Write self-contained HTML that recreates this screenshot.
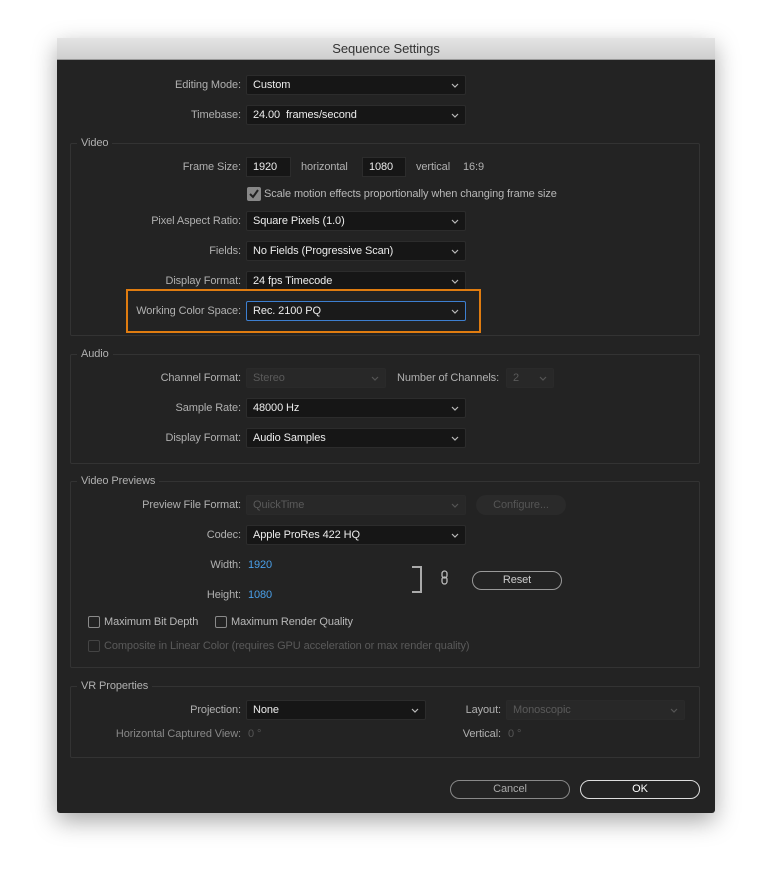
<!DOCTYPE html>
<html><head><meta charset="utf-8"><style>
*{box-sizing:border-box;margin:0;padding:0}
body{width:770px;height:888px;background:#fff;position:relative;overflow:hidden;font-family:"Liberation Sans",sans-serif;font-size:11px;letter-spacing:-0.1px}
.dlg{position:absolute;left:57px;top:38px;width:658px;height:775px;background:#232323;box-shadow:0 8px 24px rgba(0,0,0,.35);border-radius:3px;overflow:hidden}
.tb{position:absolute;left:57px;top:38px;width:658px;height:22px;background:linear-gradient(#e4e4e4,#cfcfcf);border-bottom:1px solid #999;text-align:center;line-height:22px;font-size:13px;color:#333}
.a{position:absolute;white-space:nowrap}
.l{position:absolute;white-space:nowrap;color:#b0b0b0;text-align:right;line-height:20px;top:0}
.dd{position:absolute;height:20px;background:#161616;border:1px solid #2c2c2c;border-radius:2px;color:#ececec;line-height:19px;padding-left:6px}
.dd svg{position:absolute;right:6px;top:7px}
.dis{background:#282828;border-color:#2a2a2a;color:#5a5a5a}
.box{position:absolute;border:1px solid #333;border-radius:2px}
.lg{position:absolute;background:#232323;color:#b0b0b0;padding:0 4px 0 0;line-height:14px}
.in{position:absolute;height:20px;background:#161616;border:1px solid #2c2c2c;color:#ececec;line-height:19px;padding-left:6px}
.cb{position:absolute;width:12px;height:12px;border:1px solid #8a8a8a;border-radius:2px}
.btn{position:absolute;height:19px;border:1.5px solid #999;border-radius:10px;text-align:center;line-height:17px;color:#ccc}
.blue{color:#4a9fe8}
</style></head><body>
<div class="dlg"></div>
<div class="tb">Sequence Settings</div>

<div class="l" style="right:529px;top:75px">Editing Mode:</div>
<div class="dd" style="left:246px;top:75px;width:220px">Custom<svg width="8" height="6"><polyline points="1,1 4,4 7,1" fill="none" stroke="#bbb" stroke-width="1.2"/></svg></div>
<div class="l" style="right:529px;top:105px">Timebase:</div>
<div class="dd" style="left:246px;top:105px;width:220px">24.00&nbsp; frames/second<svg width="8" height="6"><polyline points="1,1 4,4 7,1" fill="none" stroke="#bbb" stroke-width="1.2"/></svg></div>

<div class="box" style="left:70px;top:143px;width:630px;height:193px"></div>
<div class="lg" style="left:77px;top:136px;padding-left:4px">Video</div>
<div class="l" style="right:529px;top:157px">Frame Size:</div>
<div class="in" style="left:246px;top:157px;width:45px">1920</div>
<div class="l" style="left:301px;top:157px">horizontal</div>
<div class="in" style="left:362px;top:157px;width:44px">1080</div>
<div class="l" style="left:416px;top:157px">vertical</div>
<div class="l" style="left:463px;top:157px">16:9</div>
<div class="a" style="left:247px;top:187px;width:14px;height:14px;background:#888;border-radius:2px"><svg width="14" height="14"><polyline points="3,7 6,10 11,3" fill="none" stroke="#222" stroke-width="2"/></svg></div>
<div class="l" style="left:264px;top:184px;color:#b8b8b8">Scale motion effects proportionally when changing frame size</div>
<div class="l" style="right:529px;top:211px">Pixel Aspect Ratio:</div>
<div class="dd" style="left:246px;top:211px;width:220px">Square Pixels (1.0)<svg width="8" height="6"><polyline points="1,1 4,4 7,1" fill="none" stroke="#bbb" stroke-width="1.2"/></svg></div>
<div class="l" style="right:529px;top:241px">Fields:</div>
<div class="dd" style="left:246px;top:241px;width:220px">No Fields (Progressive Scan)<svg width="8" height="6"><polyline points="1,1 4,4 7,1" fill="none" stroke="#bbb" stroke-width="1.2"/></svg></div>
<div class="l" style="right:529px;top:271px">Display Format:</div>
<div class="dd" style="left:246px;top:271px;width:220px">24 fps Timecode<svg width="8" height="6"><polyline points="1,1 4,4 7,1" fill="none" stroke="#bbb" stroke-width="1.2"/></svg></div>
<div class="a" style="left:126px;top:289px;width:355px;height:44px;border:2px solid #e07c10"></div>
<div class="l" style="right:529px;top:301px">Working Color Space:</div>
<div class="dd" style="left:246px;top:301px;width:220px;border-color:#3d7fd0;background:#1a1a1a">Rec. 2100 PQ<svg width="8" height="6"><polyline points="1,1 4,4 7,1" fill="none" stroke="#bbb" stroke-width="1.2"/></svg></div>

<div class="box" style="left:70px;top:354px;width:630px;height:110px"></div>
<div class="lg" style="left:77px;top:347px;padding-left:4px">Audio</div>
<div class="l" style="right:529px;top:368px">Channel Format:</div>
<div class="dd dis" style="left:246px;top:368px;width:140px">Stereo<svg width="8" height="6"><polyline points="1,1 4,4 7,1" fill="none" stroke="#555" stroke-width="1.2"/></svg></div>
<div class="l" style="left:397px;top:368px">Number of Channels:</div>
<div class="dd dis" style="left:506px;top:368px;width:48px">2<svg width="8" height="6"><polyline points="1,1 4,4 7,1" fill="none" stroke="#555" stroke-width="1.2"/></svg></div>
<div class="l" style="right:529px;top:398px">Sample Rate:</div>
<div class="dd" style="left:246px;top:398px;width:220px">48000 Hz<svg width="8" height="6"><polyline points="1,1 4,4 7,1" fill="none" stroke="#bbb" stroke-width="1.2"/></svg></div>
<div class="l" style="right:529px;top:428px">Display Format:</div>
<div class="dd" style="left:246px;top:428px;width:220px">Audio Samples<svg width="8" height="6"><polyline points="1,1 4,4 7,1" fill="none" stroke="#bbb" stroke-width="1.2"/></svg></div>

<div class="box" style="left:70px;top:481px;width:630px;height:187px"></div>
<div class="lg" style="left:77px;top:474px;padding-left:4px">Video Previews</div>
<div class="l" style="right:529px;top:495px">Preview File Format:</div>
<div class="dd dis" style="left:246px;top:495px;width:220px">QuickTime<svg width="8" height="6"><polyline points="1,1 4,4 7,1" fill="none" stroke="#555" stroke-width="1.2"/></svg></div>
<div class="a" style="left:476px;top:495px;width:90px;height:20px;background:#2a2a2a;border-radius:10px;color:#555;text-align:center;line-height:20px">Configure...</div>
<div class="l" style="right:529px;top:525px">Codec:</div>
<div class="dd" style="left:246px;top:525px;width:220px">Apple ProRes 422 HQ<svg width="8" height="6"><polyline points="1,1 4,4 7,1" fill="none" stroke="#bbb" stroke-width="1.2"/></svg></div>
<div class="l" style="right:529px;top:555px">Width:</div>
<div class="l blue" style="left:248px;top:555px">1920</div>
<div class="l" style="right:529px;top:585px">Height:</div>
<div class="l blue" style="left:248px;top:585px">1080</div>
<div class="a" style="left:412px;top:566px;width:10px;height:27px;border:2px solid #aaa;border-left:none"></div>
<svg class="a" style="left:440px;top:570px" width="10" height="16"><rect x="2" y="1" width="5" height="7" rx="2.5" fill="none" stroke="#bbb" stroke-width="1.3"/><rect x="2" y="7" width="5" height="7" rx="2.5" fill="none" stroke="#bbb" stroke-width="1.3"/></svg>
<div class="btn" style="left:472px;top:571px;width:90px">Reset</div>
<div class="cb" style="left:88px;top:616px"></div>
<div class="l" style="left:104px;top:612px;color:#b8b8b8">Maximum Bit Depth</div>
<div class="cb" style="left:215px;top:616px"></div>
<div class="l" style="left:231px;top:612px;color:#b8b8b8">Maximum Render Quality</div>
<div class="cb" style="left:88px;top:640px;border-color:#444"></div>
<div class="l" style="left:104px;top:636px;color:#5a5a5a">Composite in Linear Color (requires GPU acceleration or max render quality)</div>

<div class="box" style="left:70px;top:686px;width:630px;height:72px"></div>
<div class="lg" style="left:77px;top:679px;padding-left:4px">VR Properties</div>
<div class="l" style="right:529px;top:700px">Projection:</div>
<div class="dd" style="left:246px;top:700px;width:180px">None<svg width="8" height="6"><polyline points="1,1 4,4 7,1" fill="none" stroke="#bbb" stroke-width="1.2"/></svg></div>
<div class="l" style="right:529px;top:724px;color:#888">Horizontal Captured View:</div>
<div class="l" style="left:248px;top:724px;color:#555">0 °</div>
<div class="l" style="right:269px;top:700px">Layout:</div>
<div class="dd dis" style="left:506px;top:700px;width:179px">Monoscopic<svg width="8" height="6"><polyline points="1,1 4,4 7,1" fill="none" stroke="#555" stroke-width="1.2"/></svg></div>
<div class="l" style="right:269px;top:724px">Vertical:</div>
<div class="l" style="left:508px;top:724px;color:#555">0 °</div>

<div class="btn" style="left:450px;top:780px;width:120px;border-color:#888;color:#aaa">Cancel</div>
<div class="btn" style="left:580px;top:780px;width:120px;border-color:#ddd;color:#fff">OK</div>
</body></html>
